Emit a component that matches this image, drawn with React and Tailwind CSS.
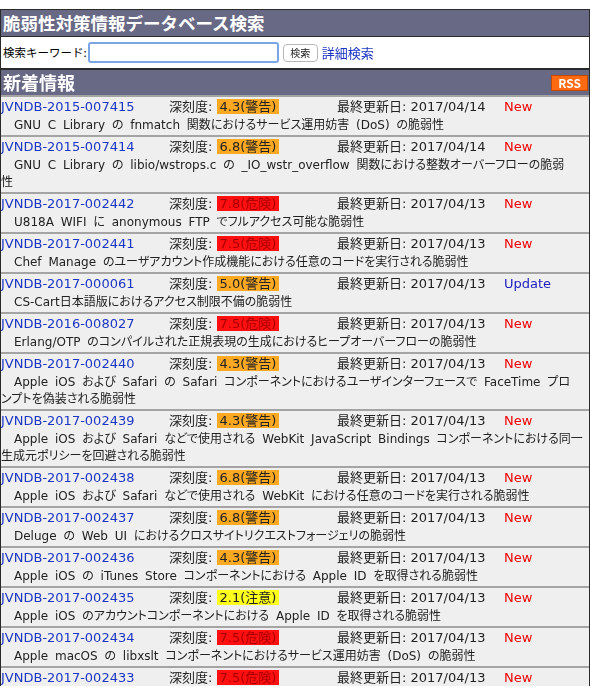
import React from "react";

const levels = {
  warn: { label: "警告", cls: "bg-[#fba823] text-[#222]" },
  danger: { label: "危険", cls: "bg-[#ff0f0f] text-[#a80000]" },
  caution: { label: "注意", cls: "bg-[#ffff1e] text-[#222]" },
};

const items = [
  { id: "JVNDB-2015-007415", score: "4.3", level: "warn", date: "2017/04/14", status: "New", title: "GNU C Library の fnmatch 関数におけるサービス運用妨害 (DoS) の脆弱性" },
  { id: "JVNDB-2015-007414", score: "6.8", level: "warn", date: "2017/04/14", status: "New", title: "GNU C Library の libio/wstrops.c の _IO_wstr_overflow 関数における整数オーバーフローの脆弱\n性" },
  { id: "JVNDB-2017-002442", score: "7.8", level: "danger", date: "2017/04/13", status: "New", title: "U818A WIFI に anonymous FTP でフルアクセス可能な脆弱性" },
  { id: "JVNDB-2017-002441", score: "7.5", level: "danger", date: "2017/04/13", status: "New", title: "Chef Manage のユーザアカウント作成機能における任意のコードを実行される脆弱性" },
  { id: "JVNDB-2017-000061", score: "5.0", level: "warn", date: "2017/04/13", status: "Update", title: "CS-Cart日本語版におけるアクセス制限不備の脆弱性" },
  { id: "JVNDB-2016-008027", score: "7.5", level: "danger", date: "2017/04/13", status: "New", title: "Erlang/OTP のコンパイルされた正規表現の生成におけるヒープオーバーフローの脆弱性" },
  { id: "JVNDB-2017-002440", score: "4.3", level: "warn", date: "2017/04/13", status: "New", title: "Apple iOS および Safari の Safari コンポーネントにおけるユーザインターフェースで FaceTime プロ\nンプトを偽装される脆弱性" },
  { id: "JVNDB-2017-002439", score: "4.3", level: "warn", date: "2017/04/13", status: "New", title: "Apple iOS および Safari などで使用される WebKit JavaScript Bindings コンポーネントにおける同一\n生成元ポリシーを回避される脆弱性" },
  { id: "JVNDB-2017-002438", score: "6.8", level: "warn", date: "2017/04/13", status: "New", title: "Apple iOS および Safari などで使用される WebKit における任意のコードを実行される脆弱性" },
  { id: "JVNDB-2017-002437", score: "6.8", level: "warn", date: "2017/04/13", status: "New", title: "Deluge の Web UI におけるクロスサイトリクエストフォージェリの脆弱性" },
  { id: "JVNDB-2017-002436", score: "4.3", level: "warn", date: "2017/04/13", status: "New", title: "Apple iOS の iTunes Store コンポーネントにおける Apple ID を取得される脆弱性" },
  { id: "JVNDB-2017-002435", score: "2.1", level: "caution", date: "2017/04/13", status: "New", title: "Apple iOS のアカウントコンポーネントにおける Apple ID を取得される脆弱性" },
  { id: "JVNDB-2017-002434", score: "7.5", level: "danger", date: "2017/04/13", status: "New", title: "Apple macOS の libxslt コンポーネントにおけるサービス運用妨害 (DoS) の脆弱性" },
  { id: "JVNDB-2017-002433", score: "7.5", level: "danger", date: "2017/04/13", status: "New", title: "Apple macOS の libxslt コンポーネントにおける任意のコードを実行される脆弱性" },
];

// Latin glyphs from DejaVu, Japanese falls through to Noto CJK
const listFont = "font-['DejaVu_Sans','Noto_Sans_CJK_JP',sans-serif]";

const Row = ({ item }) => {
  const lv = levels[item.level];
  return (
    <div className={`bg-[#efefef] border-t-2 border-[#a4a4a4] pb-[1px] ${listFont}`}>
      <div className="flex h-[20px] items-center text-[13px] leading-[20px]">
        <a className="w-[168px] text-[#1c36c4] whitespace-nowrap">{item.id}</a>
        <div className="w-[168px] whitespace-nowrap text-[#222]">
          深刻度:{" "}
          <span className={`px-[3px] ${lv.cls}`}>
            {item.score}({lv.label})
          </span>
        </div>
        <div className="w-[167px] whitespace-nowrap text-[#222]">最終更新日: {item.date}</div>
        <div className={item.status === "New" ? "text-[#f00000]" : "text-[#1c1cc0]"}>{item.status}</div>
      </div>
      <p className="whitespace-pre-line text-[12px] leading-[17px] text-[#222] indent-[13px] [word-spacing:3px] [font-feature-settings:'palt']">
        {item.title}
      </p>
    </div>
  );
};

export default function App() {
  return (
    <div className="h-[695px] w-[590px] overflow-hidden bg-white pt-[9px] font-['Noto_Sans_CJK_JP','Noto_Sans',sans-serif]">
      <div className="h-[677px] overflow-hidden border-x border-[#2a2a2a]">
        <div className="h-[27px] border-t border-[#2a2a2a] bg-[#686a85] pl-[2px] text-[17.5px] font-bold leading-[25px] text-white">
          脆弱性対策情報データベース検索
        </div>
        <div className="flex h-[32px] items-center border-t border-[#2a2a2a] bg-white pl-[2px]">
          <span className="text-[11.5px] text-black">検索キーワード:</span>
          <input
            autoFocus
            className="ml-[1px] h-[21px] w-[191px] rounded-[3px] border-2 border-[#7aa6e6] px-1 text-[12px] outline-none"
          />
          <button className="ml-[4px] h-[18px] w-[35px] rounded-[4px] border border-[#b8b8b8] bg-white text-[10px] leading-[16px] text-[#222]">
            検索
          </button>
          <a className="ml-[4px] text-[13px] text-[#1c36c4]">詳細検索</a>
        </div>
        <div className="flex h-[27px] items-center justify-between border-t-2 border-[#2a2a2a] bg-[#686a85] pl-[2px] pr-[1px]">
          <span className="text-[18px] font-bold leading-[25px] text-white">新着情報</span>
          <span className="border border-[#c24a00] bg-[#ff6a10] px-[6px] text-[12px] font-bold leading-[14px] text-white">
            RSS
          </span>
        </div>
        {items.map((item) => (
          <Row key={item.id} item={item} />
        ))}
      </div>
    </div>
  );
}
